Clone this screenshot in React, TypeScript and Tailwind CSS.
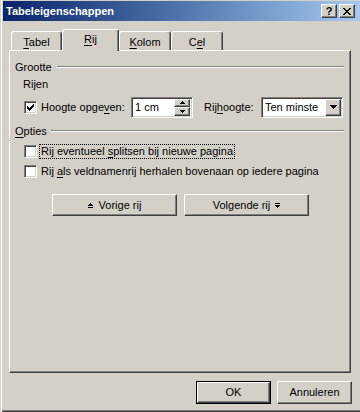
import React from "react";

const raised =
  "border border-t-white border-l-white border-r-[#404040] border-b-[#404040] shadow-[inset_-1px_-1px_#808080]";
const sunken =
  "border border-t-[#808080] border-l-[#808080] border-r-white border-b-white shadow-[inset_1px_1px_#404040,inset_-1px_-1px_#D4D0C8]";

function Px({ rows, color = "#000" }: { rows: string[]; color?: string }) {
  const h = rows.length;
  const w = rows[0].length;
  return (
    <svg width={w} height={h} viewBox={`0 0 ${w} ${h}`} shapeRendering="crispEdges" className="block">
      {rows.map((r, y) =>
        r.split("").map((c, x) =>
          c === "x" ? <rect key={`${x}-${y}`} x={x} y={y} width={1} height={1} fill={color} /> : null
        )
      )}
    </svg>
  );
}

const CHECK = ["......x", ".....xx", "x...xxx", "xx.xxx.", "xxxxx..", ".xxx...", "..x...."];
const CLOSE = ["xx....xx", ".xx..xx.", "..xxxx..", "...xx...", "..xxxx..", ".xx..xx.", "xx....xx"];
const SPIN_UP = ["..x..", ".xxx.", "xxxxx"];
const SPIN_DOWN = ["xxxxx", ".xxx.", "..x.."];
const DROP = ["xxxxxxx", ".xxxxx.", "..xxx..", "...x..."];
const PREV = ["..x..", ".xxx.", "xxxxx", ".....", "xxxxx"];
const NEXT = ["xxxxx", ".....", "xxxxx", ".xxx.", "..x.."];

function U({ children }: { children: React.ReactNode }) {
  return <span className="underline underline-offset-[2px]">{children}</span>;
}

function Checkbox({ checked }: { checked?: boolean }) {
  return (
    <div className={`w-[13px] h-[13px] shrink-0 bg-white flex items-center justify-center ${sunken}`}>
      {checked ? <Px rows={CHECK} /> : null}
    </div>
  );
}

function GroupHeader({ children, gap }: { children: React.ReactNode; gap: string }) {
  return (
    <div className="h-[14px] flex items-center pl-[5px] pr-[6px]">
      <span className="leading-[13px] whitespace-nowrap">{children}</span>
      <div className={`flex-1 h-[2px] border-t border-t-[#808080] border-b border-b-white ${gap}`} />
    </div>
  );
}

function Tab({ children, width, selected }: { children: React.ReactNode; width: string; selected?: boolean }) {
  return (
    <div
      className={`${width} ${
        selected ? "h-[22px] -mb-[1px] relative z-10 pb-[2px]" : "h-[19px] pt-[2px]"
      } bg-[#D4D0C8] flex items-center justify-center border-l border-t border-t-white border-l-white border-r border-r-[#404040] rounded-t-[3px] shadow-[inset_-1px_0_#808080] leading-[13px]`}
    >
      <span>{children}</span>
    </div>
  );
}

export default function App() {
  return (
    <div className="w-[360px] h-[412px] overflow-hidden bg-[#D4D0C8] pt-[1px] pl-[3px] flex flex-col text-[11px] leading-[13px] text-black font-['Liberation_Sans',Arial,sans-serif] shadow-[inset_1px_0_#D4D0C8,inset_2px_0_#fff,inset_0_-1px_#404040,inset_0_-2px_#808080]">
      {/* Title bar */}
      <div className="h-[20px] shrink-0 flex items-center bg-linear-to-r from-[#0A246A] to-[#A6CAF0] pl-[3px] pr-[5px]">
        <span className="text-white font-bold text-[11px] flex-1">Tabeleigenschappen</span>
        <div className="flex gap-[2px]">
          <div className={`w-[16px] h-[14px] bg-[#D4D0C8] flex items-center justify-center ${raised}`}>
            <span className="font-bold text-[11px] leading-[11px] text-black">?</span>
          </div>
          <div className={`w-[16px] h-[14px] bg-[#D4D0C8] flex items-center justify-center ${raised}`}>
            <Px rows={CLOSE} />
          </div>
        </div>
      </div>

      {/* Tabs */}
      <div className="mt-[8px] ml-[6px] pl-[2px] flex items-end">
        <Tab width="w-[51px]">
          <U>T</U>abel
        </Tab>
        <Tab width="w-[57px]" selected>
          <U>R</U>ij
        </Tab>
        <Tab width="w-[52px]">
          <U>K</U>olom
        </Tab>
        <Tab width="w-[52px]">
          C<U>e</U>l
        </Tab>
      </div>

      {/* Panel */}
      <div className="w-[342px] h-[323px] ml-[6px] shrink-0 border border-t-white border-l-white border-r-[#404040] border-b-[#404040] shadow-[inset_-1px_-1px_#808080] flex flex-col">
        <div className="mt-[9px]">
          <GroupHeader gap="ml-[5px]">Grootte</GroupHeader>
        </div>
        <div className="mt-[4px] h-[13px] pl-[13px] flex items-center">Rijen</div>

        <div className="mt-[5px] h-[22px] pl-[14px] flex items-center">
          <div className="w-[107px] flex items-center">
            <Checkbox checked />
            <span className="ml-[4px] whitespace-nowrap">
              Hoogte opge<U>v</U>en:
            </span>
          </div>
          <div className={`w-[62px] h-[21px] bg-white flex items-center pl-[3px] pr-[2px] ${sunken}`}>
            <span className="flex-1">1 cm</span>
            <div className="flex flex-col w-[16px] h-[17px]">
              <div className={`flex-1 bg-[#D4D0C8] flex items-center justify-center ${raised}`}>
                <Px rows={SPIN_UP} />
              </div>
              <div className={`flex-1 bg-[#D4D0C8] flex items-center justify-center ${raised}`}>
                <Px rows={SPIN_DOWN} />
              </div>
            </div>
          </div>
          <div className="ml-[11px] w-[57px] whitespace-nowrap">
            Rij<U>h</U>oogte:
          </div>
          <div className={`w-[82px] h-[21px] bg-white flex items-center pl-[3px] pr-[1px] ${sunken}`}>
            <span className="flex-1 whitespace-nowrap">Ten minste</span>
            <div className={`w-[16px] h-[17px] bg-[#D4D0C8] flex items-center justify-center ${raised}`}>
              <Px rows={DROP} />
            </div>
          </div>
        </div>

        <div className="mt-[6px]">
          <GroupHeader gap="ml-[4px]">
            <U>O</U>pties
          </GroupHeader>
        </div>

        <div className="mt-[5px] h-[16px] pl-[14px] flex items-center">
          <Checkbox />
          <div className="ml-[2px] h-[15px] px-[1px] border border-dotted border-black whitespace-nowrap leading-[13px]">
            <span>
              Rij eventueel <U>s</U>plitsen bij nieuwe pagina
            </span>
          </div>
        </div>
        <div className="mt-[4px] h-[16px] pl-[14px] flex items-center">
          <Checkbox />
          <div className="ml-[2px] h-[15px] px-[1px] border border-transparent whitespace-nowrap leading-[13px]">
            <span>
              Rij <U>a</U>ls veldnamenrij herhalen bovenaan op iedere pagina
            </span>
          </div>
        </div>

        <div className="mt-[15px] pl-[42px] flex gap-[7px]">
          <div className={`w-[125px] h-[22px] flex items-center justify-center gap-[6px] ${raised}`}>
            <Px rows={PREV} />
            <span>Vorige rij</span>
          </div>
          <div className={`w-[125px] h-[22px] flex items-center justify-center gap-[5px] ${raised}`}>
            <span>Volgende rij</span>
            <Px rows={NEXT} />
          </div>
        </div>
      </div>

      {/* Bottom buttons */}
      <div className="mt-[8px] pr-[8px] flex justify-end gap-[6px]">
        <div className="w-[75px] h-[23px] border border-black">
          <div className={`w-full h-full flex items-center justify-center ${raised}`}>OK</div>
        </div>
        <div className={`w-[75px] h-[23px] flex items-center justify-center ${raised}`}>Annuleren</div>
      </div>
    </div>
  );
}
